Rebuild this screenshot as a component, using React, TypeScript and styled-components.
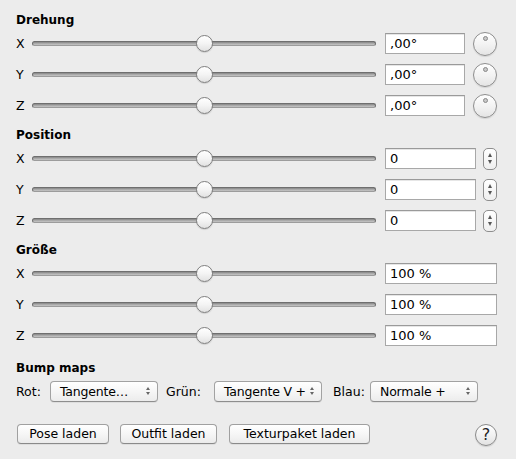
import React from "react";
import styled, { createGlobalStyle } from "styled-components";

const Global = createGlobalStyle`
  html, body { margin: 0; padding: 0; background: #ececec; }
  body { font-family: "DejaVu Sans", "Open Sans", sans-serif; color: #000; }
`;

const Panel = styled.div`
  width: 516px;
  height: 459px;
  box-sizing: border-box;
  padding: 12px 19px 0 16px;
  background: #ececec;
`;

const Section = styled.section<{ $gap: number }>`
  margin-top: ${(p) => p.$gap}px;
`;

const Heading = styled.h2`
  margin: 0;
  font-size: 12px;
  font-weight: bold;
  line-height: 16px;
  height: 16px;
`;

const Row = styled.div`
  display: flex;
  align-items: center;
  height: 31px;
`;

const AxisLabel = styled.span`
  width: 16px;
  font-size: 12.5px;
  line-height: 16px;
`;

const SliderBox = styled.div`
  position: relative;
  width: 344px;
  height: 17px;
  display: flex;
  align-items: center;
`;

const Rail = styled.div`
  width: 100%;
  height: 5px;
  box-sizing: border-box;
  border-radius: 3px;
  border: 1px solid #6f6f6f;
  border-bottom-color: #9c9c9c;
  background: linear-gradient(#858585, #aaaaaa 50%, #c6c6c6);
`;

const Thumb = styled.div<{ $value: number }>`
  position: absolute;
  top: 0;
  left: calc(${(p) => p.$value}% - 8.5px);
  width: 17px;
  height: 17px;
  box-sizing: border-box;
  border-radius: 50%;
  border: 1px solid #7f7f7f;
  background: linear-gradient(#ffffff, #f4f4f4 50%, #e2e2e2);
  box-shadow: 0 1px 1px rgba(0, 0, 0, 0.12);
`;

const Field = styled.div<{ $width: number }>`
  margin-left: 9px;
  width: ${(p) => p.$width}px;
  height: 21px;
  box-sizing: border-box;
  border: 1px solid #a8a8a8;
  border-top-color: #9a9a9a;
  background: #fff;
  font-size: 13px;
  line-height: 19px;
  padding-left: 4px;
  box-shadow: inset 0 1px 0 #e6e6e6;
`;

const Knob = styled.div`
  position: relative;
  margin-left: 8px;
  width: 24px;
  height: 24px;
  box-sizing: border-box;
  border-radius: 50%;
  border: 1px solid #8e8e8e;
  background: linear-gradient(#ffffff, #f2f2f2 55%, #e4e4e4);
  box-shadow: 0 1px 1px rgba(0, 0, 0, 0.1);
`;

const KnobDot = styled.span`
  position: absolute;
  top: 3px;
  left: 50%;
  width: 5px;
  height: 5px;
  margin-left: -2.5px;
  box-sizing: border-box;
  border-radius: 50%;
  border: 1px solid #8a8a8a;
  background: #c8c8c8;
`;

const Stepper = styled.div`
  margin-left: 7px;
  width: 14px;
  height: 22px;
  box-sizing: border-box;
  border-radius: 5px;
  border: 1px solid #8e8e8e;
  background: linear-gradient(#ffffff, #efefef);
  display: flex;
  flex-direction: column;
  align-items: center;
  justify-content: center;
  gap: 3px;
`;

const Arrow = styled.span<{ $down?: boolean }>`
  width: 0;
  height: 0;
  border-left: 2.5px solid transparent;
  border-right: 2.5px solid transparent;
  ${(p) =>
    p.$down
      ? "border-top: 4px solid #555;"
      : "border-bottom: 4px solid #555;"}
`;

const PopupRow = styled.div`
  display: flex;
  align-items: center;
  height: 31px;
  font-size: 12.5px;
`;

const PopupLabel = styled.span<{ $width: number; $gap: number }>`
  width: ${(p) => p.$width}px;
  margin-left: ${(p) => p.$gap}px;
  font-size: 12.5px;
`;

const Popup = styled.div`
  position: relative;
  width: 108px;
  height: 21px;
  box-sizing: border-box;
  border-radius: 4px;
  border: 1px solid #a2a2a2;
  border-bottom-color: #8e8e8e;
  background: linear-gradient(#ffffff, #f6f6f6 50%, #ececec);
  box-shadow: 0 1px 0 rgba(0, 0, 0, 0.06);
  font-size: 12.5px;
  letter-spacing: -0.2px;
  line-height: 19px;
  padding-left: 9px;
  white-space: nowrap;
`;

const PopupArrows = styled.span`
  position: absolute;
  right: 7px;
  top: 5px;
  display: flex;
  flex-direction: column;
  gap: 2px;
`;

const SmallArrow = styled.span<{ $down?: boolean }>`
  width: 0;
  height: 0;
  border-left: 2.5px solid transparent;
  border-right: 2.5px solid transparent;
  ${(p) =>
    p.$down
      ? "border-top: 3.5px solid #666;"
      : "border-bottom: 3.5px solid #666;"}
`;

const ButtonRow = styled.div`
  display: flex;
  align-items: center;
  height: 27px;
  margin-top: 13px;
  padding-left: 1px;
`;

const PushButton = styled.button<{ $width: number; $gap: number }>`
  width: ${(p) => p.$width}px;
  margin-left: ${(p) => p.$gap}px;
  height: 20px;
  box-sizing: border-box;
  padding: 0;
  border-radius: 4px;
  border: 1px solid #a0a0a0;
  border-bottom-color: #8a8a8a;
  background: linear-gradient(#ffffff, #f6f6f6 50%, #ebebeb);
  box-shadow: 0 1px 0 rgba(0, 0, 0, 0.06);
  font-family: inherit;
  font-size: 12.5px;
  color: #000;
  line-height: 18px;
`;

const HelpButton = styled.button`
  margin-left: auto;
  margin-top: 3px;
  width: 22px;
  height: 22px;
  box-sizing: border-box;
  padding: 0;
  border-radius: 50%;
  border: 1px solid #8a8a8a;
  background: linear-gradient(#ffffff, #f0f0f0 55%, #e2e2e2);
  box-shadow: 0 1px 1px rgba(0, 0, 0, 0.12);
  font-family: inherit;
  font-size: 16px;
  line-height: 20px;
  color: #222;
`;

const Slider = ({ value }: { value: number }) => (
  <SliderBox>
    <Rail />
    <Thumb $value={value} />
  </SliderBox>
);

type Kind = "knob" | "stepper" | "none";

const AxisRow = ({
  axis,
  text,
  width,
  kind,
}: {
  axis: string;
  text: string;
  width: number;
  kind: Kind;
}) => (
  <Row>
    <AxisLabel>{axis}</AxisLabel>
    <Slider value={50} />
    <Field $width={width}>{text}</Field>
    {kind === "knob" && (
      <Knob>
        <KnobDot />
      </Knob>
    )}
    {kind === "stepper" && (
      <Stepper>
        <Arrow />
        <Arrow $down />
      </Stepper>
    )}
  </Row>
);

const sections: {
  title: string;
  text: string;
  width: number;
  kind: Kind;
  gap: number;
}[] = [
  { title: "Drehung", text: ",00°", width: 80, kind: "knob", gap: 0 },
  { title: "Position", text: "0", width: 91, kind: "stepper", gap: 6 },
  { title: "Größe", text: "100 %", width: 112, kind: "none", gap: 6 },
];

const PopupButton = ({ label }: { label: string }) => (
  <Popup>
    {label}
    <PopupArrows>
      <SmallArrow />
      <SmallArrow $down />
    </PopupArrows>
  </Popup>
);

export default function App() {
  return (
    <>
      <Global />
      <Panel>
        {sections.map((s) => (
          <Section key={s.title} $gap={s.gap}>
            <Heading>{s.title}</Heading>
            {["X", "Y", "Z"].map((a) => (
              <AxisRow key={a} axis={a} text={s.text} width={s.width} kind={s.kind} />
            ))}
          </Section>
        ))}
        <Section $gap={9}>
          <Heading>Bump maps</Heading>
          <PopupRow>
            <PopupLabel $width={34} $gap={0}>Rot:</PopupLabel>
            <PopupButton label="Tangente…" />
            <PopupLabel $width={48} $gap={8}>Grün:</PopupLabel>
            <PopupButton label="Tangente V +" />
            <PopupLabel $width={37} $gap={11}>Blau:</PopupLabel>
            <PopupButton label="Normale +" />
          </PopupRow>
          <ButtonRow>
            <PushButton $width={92} $gap={0}>Pose laden</PushButton>
            <PushButton $width={97} $gap={11}>Outfit laden</PushButton>
            <PushButton $width={141} $gap={12}>Texturpaket laden</PushButton>
            <HelpButton>?</HelpButton>
          </ButtonRow>
        </Section>
      </Panel>
    </>
  );
}
